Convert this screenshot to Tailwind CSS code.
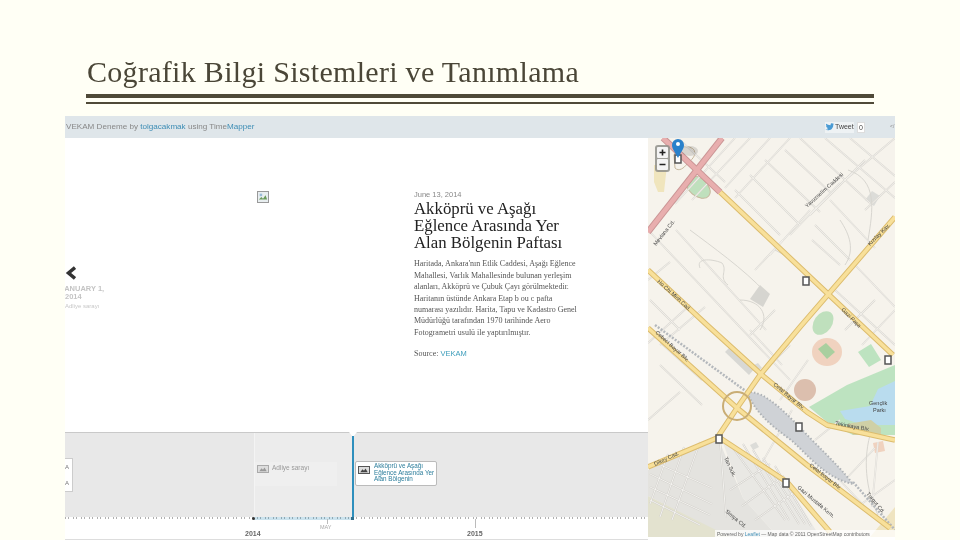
<!DOCTYPE html>
<html lang="en">
<head>
    <meta charset="UTF-8">
    <title>Coğrafik Bilgi Sistemleri ve Tanımlama</title>
    <script src="https://cdn.jsdelivr.net/npm/@tailwindcss/browser@4"></script>
</head>
<body class="bg-[#fffff5] w-[960px] h-[540px] overflow-hidden font-['Liberation_Sans',sans-serif]">
    <!-- Slide title -->
    <div class="pl-[86px] pr-[86px] pt-[55px]">
        <h1 class="font-['Liberation_Serif',serif] text-[30px] leading-[34px] tracking-[0.3px] text-[#4a4637] h-[39px] pl-px whitespace-nowrap blur-[0.3px]">Coğrafik Bilgi Sistemleri ve Tanımlama</h1>
        <div class="h-[4px] bg-[#4f4a38]"></div>
        <div class="h-[2px] mt-[4px] bg-[#4f4a38]"></div>
    </div>

    <!-- Embedded screenshot -->
    <div class="ml-[65px] mt-[12px] w-[830px] h-[424px] bg-white overflow-hidden blur-[0.4px]">
        <div class="h-[22px] bg-[#dfe6ea] flex items-center justify-between pl-px text-[8.100px] text-[#888]">
            <div>VEKAM Deneme by <span class="text-[#3d8db5]">tolgacakmak</span> using Time<span class="text-[#3d8db5]">Mapper</span></div>
            <div class="flex items-center">
                <div class="flex items-center gap-[1px] bg-[#eef2f4] w-[29px] h-[11px] text-[#444] text-[7px]">
                    <svg viewBox="0 0 12 10" class="w-[9px] h-[8px] shrink-0"><path d="M0 8c3 2 8 2 10-2 1-1 1-3 1-4l1-1-1 .2L11.500 0l-1 .5C9 -.5 7 .5 7.500 2.500 5 2.500 3 1.500 1.500 .500 1 2 1.500 3 2.500 4L1.500 3.800C1.500 5 2.500 6 3.500 6.200H2.500C3 7 4 7.500 4.500 7.500 3 8.500 1.500 8.500 0 8z" fill="#4a9bd4"/></svg>
                    Tweet
                </div>
                <div class="ml-[3px] w-[8px] bg-white border border-[#ddd] h-[11px] leading-[9px] text-center text-[7px] text-[#444]">0</div>
                <div class="ml-[25px] w-[5px] text-[#888] text-[5px] whitespace-nowrap">&lt;/</div>
            </div>
        </div>

        <div class="flex">
            <div class="w-[583px] flex flex-col">
                <!-- Slide -->
                <div class="relative h-[294px] bg-white grid grid-cols-[349px_1fr]">
                    <div class="pt-[53px] pl-[192px]">
                        <svg viewBox="0 0 12 12" class="w-[12px] h-[12px] border border-[#999] bg-[#e8eef0]"><path d="M1 9l3-3 2 2 3-4 2 5z" fill="#6a9a5a"/><path d="M2 2h3v3H2z" fill="#9bbcd8"/></svg>
                    </div>
                    <div class="pt-[52px] pr-[60px]">
                        <div class="text-[7.500px] leading-[9px] text-[#888]">June 13, 2014</div>
                        <h2 class="font-['Liberation_Serif',serif] text-[16.800px] leading-[16.800px] text-[#222] mt-[2px] whitespace-nowrap">Akköprü ve Aşağı<br>Eğlence Arasında Yer<br>Alan Bölgenin Paftası</h2>
                        <p class="font-['Liberation_Serif',serif] text-[8px] leading-[11.400px] text-[#555] mt-[7px] whitespace-nowrap">Haritada, Ankara'nın Etlik Caddesi, Aşağı Eğlence<br>Mahallesi, Varlık Mahallesinde bulunan yerleşim<br>alanları, Akköprü ve Çubuk Çayı görülmektedir.<br>Haritanın üstünde Ankara Etap b ou c pafta<br>numarası yazılıdır. Harita, Tapu ve Kadastro Genel<br>Müdürlüğü tarafından 1970 tarihinde Aero<br>Fotogrametri usulü ile yaptırılmıştır.</p>
                        <p class="font-['Liberation_Serif',serif] text-[8px] leading-[10px] text-[#555] mt-[11px]">Source: <span class="font-['Liberation_Sans',sans-serif] text-[#3d9dbb] text-[7.500px]">VEKAM</span></p>
                    </div>
                    <!-- Previous slide arrow and label -->
                    <div class="absolute left-0 top-[128px]">
                        <svg viewBox="0 0 11 14" class="w-[11px] h-[14px]"><path d="M10 1.500L3.500 7l6.500 5.500" fill="none" stroke="#333" stroke-width="3.500"/></svg>
                        <div class="text-[7.500px] leading-[8px] font-bold mt-[5px] ml-[-5px] text-[#c4c4c4]">JANUARY 1,<br><span class="ml-[5px]">2014</span></div>
                        <div class="text-[6px] leading-[8px] mt-[1px] text-[#c8c8c8]">Adliye sarayı</div>
                    </div>
                </div>

                <!-- Timeline -->
                <div class="relative h-[85px] bg-[#e8e8e8] border-t border-t-[#c9c9c9]">
                    <div class="absolute left-[189px] top-0 bottom-0 w-[99px] bg-[#ececec] border-l border-l-[#f4f4f4]"></div>
                    <div class="absolute left-[284px] top-[-1px] w-0 h-0 border-l-[4px] border-r-[4px] border-t-[5px] border-l-transparent border-r-transparent border-t-white"></div>
                    <div class="absolute left-[287px] top-[3px] bottom-0 w-[2px] bg-[#2e8fbd]"></div>

                    <!-- Cut off card at the left edge -->
                    <div class="absolute left-0 top-[25px] w-[8px] h-[34px] bg-white border border-l-0 border-[#ccc] text-[6px] leading-[16px] text-[#777]">A<br>A</div>

                    <div class="absolute left-[190px] top-[29px] w-[82px] h-[24px] bg-[#efefef] flex gap-[3px] px-[2px] pt-[2px]">
                        <svg viewBox="0 0 12 8" class="w-[12px] h-[8px] mt-[1px] shrink-0 border border-[#aaa] bg-[#ddd]"><path d="M1 7l3-4 2 2 2-3 3 5z" fill="#999"/></svg>
                        <span class="text-[6.500px] leading-[7px] text-[#999]">Adliye sarayı</span>
                    </div>
                    <div class="absolute left-[290px] top-[28px] w-[82px] h-[25px] bg-white border border-[#bbb] rounded-[2px] flex gap-[4px] pl-[2px] pt-[1px]">
                        <svg viewBox="0 0 12 8" class="w-[12px] h-[8px] mt-[3px] shrink-0 border border-[#555] bg-[#ddd]"><path d="M1 7l3-4 2 2 2-3 3 5z" fill="#444"/></svg>
                        <span class="text-[6.300px] leading-[6.500px] text-[#2b7d9b] whitespace-nowrap">Akköprü ve Aşağı<br>Eğlence Arasında Yer<br>Alan Bölgenin</span>
                    </div>
                </div>

                <!-- Ruler -->
                <div class="relative h-[23px] bg-white border-b border-b-[#ddd] overflow-hidden">
                    <div class="absolute left-0 right-0 top-0 h-[2px] bg-[repeating-linear-gradient(90deg,#b0b0b0_0,#b0b0b0_1px,transparent_1px,transparent_3px,#b0b0b0_3px,#b0b0b0_4px,transparent_4px,transparent_8px)]"></div>
                    <div class="absolute left-[189px] w-[98px] top-0 h-[3px] bg-[#2e8fbd]/25"></div>
                    <div class="absolute left-[187px] top-0 w-[3px] h-[3px] bg-[#333] rounded-full"></div>
                    <div class="absolute left-[286px] top-0 w-[3px] h-[3px] bg-[#2e6f8d]"></div>
                    <div class="absolute left-[262px] top-[2px] w-px h-[5px] bg-[#bbb]"></div>
                    <div class="absolute left-[410px] top-[2px] w-px h-[9px] bg-[#bbb]"></div>
                    <div class="absolute left-[180px] top-[12px] text-[7px] leading-[9px] font-bold text-[#666]">2014</div>
                    <div class="absolute left-[255px] top-[7px] text-[5.500px] leading-[7px] text-[#aaa]">MAY</div>
                    <div class="absolute left-[402px] top-[12px] text-[7px] leading-[9px] font-bold text-[#666]">2015</div>
                </div>
            </div>

            <!-- Map -->
            <svg viewBox="648 138 247 399" class="w-[247px] h-[399px] shrink-0 bg-[#f6f3ec]" font-family="Liberation Sans, sans-serif">
                <defs>
                    <path id="streets" d="M680 140l45 42M735 138l-60 66M750 138l-58 62M770 138l-45 50M790 138l-55 60M735 190l45 45M750 175l50 50M765 160l55 52M785 150l45 42M800 138l70 65M825 138l70 60M850 138l45 38M810 215l55-55M790 235l50-52M770 255l40-45M755 270l28-30M830 200l45 48M815 225l35 35M845 180l50-42M865 210l30-28M855 265l40 42M835 290l60 55M812 240l28 25M676 230l90 100M650 232l140 148M670 262l-22 18M690 305l-42 38M660 345l45-38M680 392l-32 28M660 365l42 40M702 380l-40-36M792 410l-34 60M830 470l40 42M878 442l-6 65M650 300l30 30M750 330l32 35M775 310l-25 25M790 345l-20 20M845 330l30-30M862 345l33-35M780 400l28-40M845 480l30-32M815 440l25-20M860 505l35-25"/>
                    <path id="blocks" d="M654 462l58 26M650 474l62 30M650 487l60 28M650 500l50 25M668 454l-18 50M684 447l-24 70M700 442l-28 78M733 448l52 72M743 444l46 76M753 450l46 74M763 458l42 66M775 466l36 60M720 440l6 78M730 490l40-26M742 506l42-30M755 520l40-28"/>
                </defs>
                <!-- land use -->
                <path d="M654 165h13l-3 27-6 0-4-10z" fill="#f0e5bd"/>
                <path d="M648 496l55 26 28 15h-83z" fill="#e3e2cf"/>
                <path d="M870 537l25-30v30z" fill="#efe4c0"/>
                <ellipse cx="698" cy="187" rx="14" ry="9" transform="rotate(40 698 187)" fill="#bfe0bd" stroke="#c6b79c"/>
                <path d="M674 155c4-10 16-10 20-5 3 6-3 10-7 14-3 4-8 8-12 4z" fill="none" stroke="#c6b79c"/>
                <ellipse cx="823" cy="323" rx="9" ry="13" transform="rotate(35 823 323)" fill="#bfe0bd"/>
                <path d="M809 407l38-22 48-20v70h-42l-26-13z" fill="#bde3c0"/>
                <path d="M840 411l30-5 8-17 17-8v44l-32 0-18-6z" fill="#b9dcee"/>
                <path d="M847 424l24-4 10 8v7h-28z" fill="#cfd0a6"/>
                <ellipse cx="827" cy="352" rx="15" ry="14" fill="#f0d2bf"/>
                <path d="M818 349l8-6 9 9-8 7z" fill="#a9cf9f"/>
                <ellipse cx="805" cy="390" rx="11" ry="11" fill="#dcbfae"/>
                <path d="M858 352l13-8 10 16-12 7z" fill="#bde3c0"/>
                <path d="M725 352l6-6 24 22-6 7z" fill="#d8d8d4"/>
                <path d="M760 285l10 9-7 13-13-8z" fill="#d6d5d0"/>
                <path d="M865 200l7-9 8 5-6 10z" fill="#dcdcd8"/>
                <path d="M873 443l10-2 2 10-10 2z" fill="#f0d2bf"/>
                <path d="M752 366l6-3 4 5-6 4zM750 445l6-3 3 5-6 3z" fill="#dcdcd8"/>
                <!-- minor streets -->
                <g fill="none">
                    <use href="#streets" stroke="#dbd9d3" stroke-width="1.800"/>
                    <use href="#streets" stroke="#f9f7f2" stroke-width="0.700"/>
                    <path d="M690 230c20 15 55 40 75 62M700 268c-5-12 16-8 22-5 6 8-4 14 6 22M740 300c20 0 30 15 20 30M848 170c30 10 25 40 20 70M775 250c10 5 25 15 35 25M840 220c10 15 15 30 5 45M870 435c-8 30-2 60 8 80" stroke="#d8d6d0" stroke-width="1"/>
                </g>
                <!-- rail yard -->
                <path d="M747 392c18-2 40 22 65 48 18 18 32 32 41 44-28-6-44-28-62-44-22-16-36-28-44-48z" fill="#cfd2d6"/>
                <path d="M747 392c18-2 40 22 65 48 18 18 32 32 41 44-28-6-44-28-62-44-22-16-36-28-44-48z" fill="none" stroke="#aeb2b6" stroke-width="2" stroke-dasharray="1.500 2"/>
                <path d="M655 325l92 67M853 482l42 48" stroke="#b4b8bc" stroke-width="2.500" stroke-dasharray="2 1.500" fill="none"/>
                <!-- residential blocks -->
                <path d="M648 470l70-32 25 60 35 39h-48l-30-15-52-26z" fill="#e4e3df"/>
                <path d="M722 440l68 48 30 49h-42l-35-39z" fill="#e9e8e4"/>
                <g fill="none">
                    <use href="#blocks" stroke="#cfcdc8" stroke-width="1.800"/>
                    <use href="#blocks" stroke="#fbfaf7" stroke-width="0.800"/>
                </g>
                <!-- roads -->
                <g fill="none" stroke-linecap="butt" stroke-linejoin="round">
                    <g stroke="#dcbc6e" stroke-width="5.500">
                        <path d="M720 192l107 101 66 62"/>
                        <path d="M895 217l-95 110-40 48-23 33-20 30-69 29"/>
                        <path d="M648 270l59 55 55 50 45 37 20 13 68 15"/>
                        <path d="M648 328l89 80 70 57 83 63"/>
                        <path d="M720 438l67 44 43 50"/>
                    </g>
                    <g stroke="#f8e09a" stroke-width="3.500">
                        <path d="M720 192l107 101 66 62"/>
                        <path d="M895 217l-95 110-40 48-23 33-20 30-69 29"/>
                        <path d="M648 270l59 55 55 50 45 37 20 13 68 15"/>
                        <path d="M648 328l89 80 70 57 83 63"/>
                        <path d="M720 438l67 44 43 50"/>
                    </g>
                    <g stroke="#c99494" stroke-width="6.500">
                        <path d="M648 232l74-94"/>
                        <path d="M663 138l57 54"/>
                    </g>
                    <g stroke="#e8aeae" stroke-width="4.500">
                        <path d="M648 232l74-94"/>
                        <path d="M663 138l57 54"/>
                    </g>
                    <circle cx="737" cy="406" r="14" stroke="#c9ad75" stroke-width="2"/>
                </g>
                <!-- street names -->
                <g font-size="5.500" fill="#444">
                    <text transform="translate(656 246) rotate(-52)">Mevlana Cd.</text>
                    <text transform="translate(807 208) rotate(-42)">Yavuzselim Caddesi</text>
                    <text transform="translate(657 282) rotate(42)">Ho Chi Minh Cad.</text>
                    <text transform="translate(870 246) rotate(-45)">Kızılay Kav.</text>
                    <text transform="translate(841 310) rotate(45)">Gazi Paşa</text>
                    <text transform="translate(655 333) rotate(42)">Cebeci Bayar Blv.</text>
                    <text transform="translate(773 385) rotate(40)">Celal Bayar Blv.</text>
                    <text transform="translate(835 425) rotate(10)">Tekinkaya Blv.</text>
                    <text transform="translate(809 466) rotate(38)">Celal Bayar Blv.</text>
                    <text transform="translate(797 488) rotate(40)">Gazi Mustafa Kem.</text>
                    <text transform="translate(655 466) rotate(-25)">Dikey Cad.</text>
                    <text transform="translate(724 458) rotate(65)">Tan Sok.</text>
                    <text transform="translate(725 512) rotate(40)">Simya Cd.</text>
                    <text transform="translate(866 494) rotate(50)">Turgut Cd.</text>
                    <text x="869" y="405">Gençlik</text>
                    <text x="873" y="412">Parkı</text>
                </g>
                <!-- station icons -->
                <g fill="#fff" stroke="#555" stroke-width="1.500">
                    <rect x="675" y="155" width="6" height="8"/>
                    <rect x="803" y="277" width="6" height="8"/>
                    <rect x="885" y="356" width="6" height="8"/>
                    <rect x="796" y="423" width="6" height="8"/>
                    <rect x="716" y="435" width="6" height="8"/>
                    <rect x="783" y="479" width="6" height="8"/>
                </g>
                <!-- marker -->
                <ellipse cx="690" cy="151" rx="8" ry="5" fill="#000" opacity="0.12"/>
                <path d="M678 158c-3-6-6-9-6-13a6 6 0 0 1 12 0c0 4-3 7-6 13z" fill="#2a81cb"/>
                <circle cx="678" cy="144" r="2" fill="#fff"/>
                <!-- zoom control -->
                <rect x="655" y="145" width="15" height="27" rx="3" fill="#8f8f8b" opacity="0.85"/>
                <rect x="657" y="147" width="11" height="11" rx="1" fill="#f4f4f4"/>
                <rect x="657" y="159" width="11" height="11" rx="1" fill="#f4f4f4"/>
                <path d="M659.500 152.500h6M662.500 149.500v6M659.500 164.500h6" stroke="#222" stroke-width="1.600"/>
                <!-- attribution -->
                <rect x="715" y="530" width="180" height="7" fill="#fff" opacity="0.75"/>
                <text x="717" y="535.500" font-size="5" fill="#666">Powered by <tspan fill="#3d8db5">Leaflet</tspan> — Map data © 2011 OpenStreetMap contributors</text>
            </svg>
        </div>
    </div>
</body>
</html>
